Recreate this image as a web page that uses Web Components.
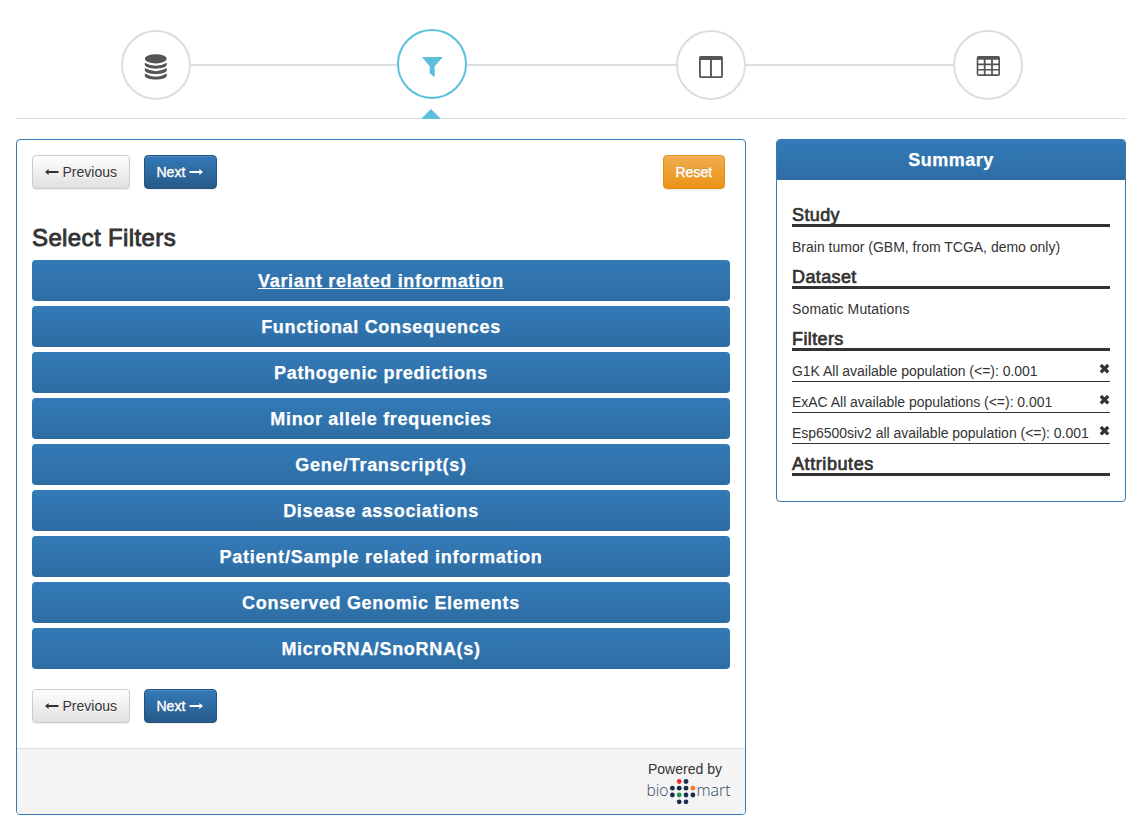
<!DOCTYPE html>
<html lang="en">
<head>
<meta charset="utf-8">
<title>Select Filters</title>
<style>
body{margin:0;background:#fff;color:#333;font:14px/20px "Liberation Sans",Arial,sans-serif;height:829px;overflow:hidden}
</style>
</head>
<body>
<mart-app></mart-app>
<script>
const define = (name, html, setup) => customElements.define(name, class extends HTMLElement {
  constructor() {
    super();
    const t = document.createElement('template');
    t.innerHTML = html;
    this.attachShadow({mode: 'open'}).append(t.content.cloneNode(true));
  }
  connectedCallback() { if (setup) setup(this, this.shadowRoot); }
});

const ICONS = {
  database: '<ellipse cx="34.8" cy="28.8" rx="11" ry="4.6"/><g transform="translate(-.2 0)"><path d="M24 32.7Q35 38.9 46 32.7V34.6C46 40 24 40 24 34.6Z"/><path d="M24 38.1Q35 44.3 46 38.1V40C46 45.4 24 45.4 24 40Z"/><path d="M24 43.6Q35 49.8 46 43.6V45.5C46 50.9 24 50.9 24 45.5Z"/></g>',
  filter: '<path d="M25.5 28H45.3V28.8L37.7 37.2V48L36.6 47.6L32.7 44.3V37.2L25.5 28.8Z"/>',
  columns: '<path fill-rule="evenodd" d="M24.7 26H45.2a1.7 1.7 0 0 1 1.7 1.7V46.3a1.7 1.7 0 0 1-1.7 1.7H24.7a1.7 1.7 0 0 1-1.7-1.7V27.7A1.7 1.7 0 0 1 24.7 26ZM24.8 30V46.2H34V30ZM35.9 30V46.2H45.1V30Z"/>',
  table: '<path fill-rule="evenodd" d="M25.5 26H45.2a1.8 1.8 0 0 1 1.8 1.8V44.2a1.8 1.8 0 0 1-1.8 1.8H25.5a1.8 1.8 0 0 1-1.8-1.8V27.8A1.8 1.8 0 0 1 25.5 26ZM25.3 29.8V33.6H30.8V29.8ZM32.6 29.8V33.6H38.1V29.8ZM39.9 29.8V33.6H45.4V29.8ZM25.3 35.2V38.9H30.8V35.2ZM32.6 35.2V38.9H38.1V35.2ZM39.9 35.2V38.9H45.4V35.2ZM25.3 40.5V44.3H30.8V40.5ZM32.6 40.5V44.3H38.1V40.5ZM39.9 40.5V44.3H45.4V40.5Z"/>'
};

define('wizard-step', `<style>
:host{display:block;width:70px;height:70px;margin-top:1px;color:#555;--ring:#ddd;position:relative}
:host([active]){margin-top:0;color:#5bc0de;--ring:#5bc0de}
svg{display:block}
.ring{fill:#fff;stroke:var(--ring);stroke-width:2}
.caret{display:none;position:absolute;left:24px;top:80px;border:10px solid transparent;border-top:0;border-bottom-color:#5bc0de}
:host([active]) .caret{display:block}
</style><svg width="70" height="70" viewBox="0 0 70 70"><circle class="ring" cx="35" cy="35" r="34"/><g fill="currentColor"></g></svg><span class="caret"></span>`,
(el, root) => { root.querySelector('g').innerHTML = ICONS[el.getAttribute('icon')]; });

define('wizard-bar', `<style>
:host{display:flex;box-sizing:border-box;margin:0 19px 0 16px;height:119px;padding:29px 103px 0 105px;border-bottom:1px solid #ddd}
i{height:2px;margin-top:35px;background:#ddd}
</style><wizard-step icon="database"></wizard-step><i style="flex:206"></i><wizard-step icon="filter" active></wizard-step><i style="flex:209"></i><wizard-step icon="columns"></wizard-step><i style="flex:207"></i><wizard-step icon="table"></wizard-step>`);

define('app-button', `<style>
:host{display:block}
button{display:flex;align-items:center;gap:4px;box-sizing:border-box;height:34px;margin:0;padding:0 12px;font:inherit;white-space:nowrap;border:1px solid #ccc;border-radius:4px;color:#333;background:linear-gradient(#fff,#e0e0e0);text-shadow:0 1px 0 #fff;box-shadow:inset 0 1px 0 rgba(255,255,255,.15),0 1px 1px rgba(0,0,0,.075);width:var(--w)}
:host([kind=primary]) button{color:#fff;border-color:#245580;background:linear-gradient(#337ab7,#265a88);text-shadow:0 -1px 0 rgba(0,0,0,.2);-webkit-text-stroke:.4px #fff}
:host([kind=warning]) button{color:#fff;border-color:#e38d13;background:linear-gradient(#f0ad4e,#eb9316);text-shadow:0 -1px 0 rgba(0,0,0,.2);-webkit-text-stroke:.4px #fff}
::slotted(span){margin-left:-.5px}
</style><button><slot></slot></button>`);

define('arrow-icon', `<style>
:host{display:block;width:14px;height:10px}
:host([right]){transform:scaleX(-1)}
svg{display:block}
</style><svg width="14" height="10" viewBox="0 0 14 10" fill="currentColor"><path d="M0 5L3.600 2V4.100H13.500V5.900H3.600V8Z"/></svg>`);

define('nav-buttons', `<style>
:host{display:flex;gap:14px}
::slotted(*){margin-left:auto;margin-right:5px}
</style><app-button style="--w:98px"><arrow-icon></arrow-icon><span>Previous</span></app-button><app-button kind="primary" style="--w:73px"><span>Next</span><arrow-icon right></arrow-icon></app-button><slot></slot>`);

define('filter-bar', `<style>
:host{display:block;box-sizing:border-box;height:41px;padding-top:1px;border-radius:4px;border-bottom:1px solid #2e6da4;background:linear-gradient(#337ab7,#2e6da4);color:#fff;font-weight:bold;font-size:18px;line-height:41px;text-align:center;letter-spacing:.68px;-webkit-text-stroke:.25px #fff}
:host([open]){text-decoration:underline;text-underline-offset:1px;text-decoration-thickness:1px;text-decoration-skip-ink:none;letter-spacing:.66px}
</style><slot></slot>`);

define('biomart-logo', `<style>
:host{display:block;width:84px;height:26px}
svg{display:block}
text{font:300 16px "Open Sans","Lato",sans-serif;fill:#34495e}
</style><svg width="84" height="26" viewBox="647 779 84 26">
<text x="646.500" y="796" textLength="22" lengthAdjust="spacingAndGlyphs">bio</text><text x="696.500" y="796" textLength="34" lengthAdjust="spacingAndGlyphs">mart</text>
<g fill="#1b2f4b"><circle cx="679.200" cy="781.500" r="2.400" fill="#ee3124"/><circle cx="686" cy="781.500" r="2.400"/>
<circle cx="672.400" cy="788.200" r="2.400"/><circle cx="679.200" cy="788.200" r="2.400"/><circle cx="686" cy="788.200" r="2.400"/><circle cx="692.900" cy="788.200" r="2.400" fill="#f47c20"/>
<circle cx="672.400" cy="795" r="2.400"/><circle cx="679.200" cy="795" r="2.400" fill="#1f9347"/><circle cx="686" cy="795" r="2.400"/><circle cx="692.900" cy="795" r="2.400"/>
<circle cx="679.200" cy="801.800" r="2.400"/><circle cx="686" cy="801.800" r="2.400"/></g></svg>`);

define('filter-panel', `<style>
:host{display:flex;flex-direction:column;box-sizing:border-box;width:730px;height:676px;border:1px solid #337ab7;border-radius:4px;overflow:hidden}
main{padding:15px 15px 0;flex:1}
h3{margin:35px 0 9px;font-size:24px;line-height:27px;font-weight:normal;-webkit-text-stroke:.9px #333;letter-spacing:.38px}
.list{display:grid;gap:5px;margin-bottom:20px}
footer{display:flex;flex-direction:column;align-items:flex-end;box-sizing:border-box;height:66px;padding:10px 14px 0;background:#f4f4f4;border-top:1px solid #ddd}
footer span{width:83px}
</style><main><nav-buttons><app-button kind="warning" style="--w:62px"><span>Reset</span></app-button></nav-buttons>
<h3>Select Filters</h3><div class="list">
<filter-bar open>Variant related information</filter-bar><filter-bar>Functional Consequences</filter-bar><filter-bar>Pathogenic predictions</filter-bar><filter-bar>Minor allele frequencies</filter-bar><filter-bar>Gene/Transcript(s)</filter-bar><filter-bar>Disease associations</filter-bar><filter-bar style="letter-spacing:.76px">Patient/Sample related information</filter-bar><filter-bar>Conserved Genomic Elements</filter-bar><filter-bar>MicroRNA/SnoRNA(s)</filter-bar></div>
<nav-buttons></nav-buttons></main><footer><span>Powered by</span><biomart-logo></biomart-logo></footer>`);

define('summary-heading', `<style>
:host{display:block;height:20px;margin:9px 0 10px;border-bottom:3px solid #333;font-size:18px;line-height:23px;letter-spacing:.38px;-webkit-text-stroke:.7px #333}
</style><slot></slot>`);

define('summary-item', `<style>
:host{display:flex;justify-content:space-between;height:20px;white-space:nowrap}
:host([removable]){border-bottom:1px solid #333;margin-bottom:10px;letter-spacing:-.03px}
svg{display:none;margin-top:3px}
:host([removable]) svg{display:block}
</style><span><slot></slot></span><svg width="11" height="10" viewBox="0 0 11 10"><path d="M1.800 1L9.200 8.300M9.200 1L1.800 8.300" stroke="#333" stroke-width="3.300"/></svg>`);

define('summary-panel', `<style>
:host{display:block;box-sizing:border-box;width:350px;height:363px;border:1px solid #337ab7;border-radius:4px;overflow:hidden}
header{height:40px;background:linear-gradient(#337ab7,#2e6da4);color:#fff;text-align:center;font-weight:bold;font-size:18px;line-height:40px;letter-spacing:.5px;-webkit-text-stroke:.25px #fff}
section{display:flex;flex-direction:column;padding:15px}
summary-item[last]{margin-bottom:0}
</style><header>Summary</header><section>
<summary-heading>Study</summary-heading><summary-item>Brain tumor (GBM, from TCGA, demo only)</summary-item>
<summary-heading>Dataset</summary-heading><summary-item style="letter-spacing:.14px">Somatic Mutations</summary-item>
<summary-heading>Filters</summary-heading><summary-item removable>G1K All available population (&lt;=): 0.001</summary-item><summary-item removable>ExAC All available populations (&lt;=): 0.001</summary-item><summary-item removable last>Esp6500siv2 all available population (&lt;=): 0.001</summary-item>
<summary-heading style="letter-spacing:.58px">Attributes</summary-heading></section>`);

define('mart-app', `<style>
:host{display:block}
.cols{display:flex;gap:30px;align-items:flex-start;padding:20px 16px 0}
</style><wizard-bar></wizard-bar><div class="cols"><filter-panel></filter-panel><summary-panel></summary-panel></div>`);
</script>
</body>
</html>
